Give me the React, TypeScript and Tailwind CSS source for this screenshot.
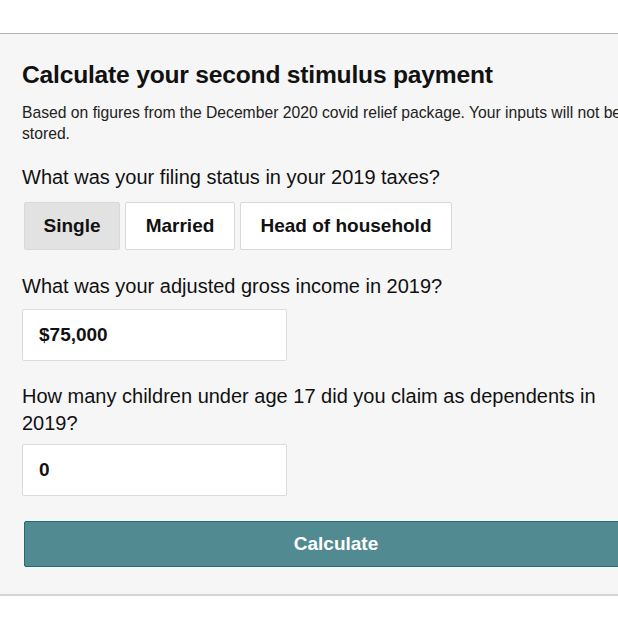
import { useState } from "react";

const statuses = [
    { label: "Single", w: "w-[96px]" },
    { label: "Married", w: "w-[110px]" },
    { label: "Head of household", w: "w-[212px]" },
];

export default function App() {
    const [status, setStatus] = useState("Single");

    return (
        <div className="w-[618px] h-[618px] overflow-hidden bg-white font-['Liberation_Sans',Arial,sans-serif] text-[#111]">
            <div className="h-[33px]" />
            <div className="w-[670px] border-t border-[#b3b3b3] border-b-2 border-b-[#d4d4d4] bg-[#f6f6f6] pl-[22px] pt-[27px] pb-[27px]">
                <div className="w-[626px]">
                    <h2 className="text-[24.6px] leading-[28px] font-bold tracking-[-0.2px]">Calculate your second stimulus payment</h2>
                    <p className="mt-[13px] text-[15.7px] leading-[21px] text-[#222]">
                        Based on figures from the December 2020 covid relief package. Your inputs will not be stored.
                    </p>

                    <p className="mt-[20px] text-[20px] leading-[27px]">What was your filing status in your 2019 taxes?</p>
                    <div className="mt-[11px] ml-[2px] flex gap-[5px]">
                        {statuses.map((s) => (
                            <button
                                key={s.label}
                                onClick={() => setStatus(s.label)}
                                className={
                                    s.w +
                                    " h-[48px] rounded-[2px] border border-[#d9d9d9] text-[19px] font-bold " +
                                    (status === s.label ? "bg-[#e2e2e2]" : "bg-white")
                                }
                            >
                                {s.label}
                            </button>
                        ))}
                    </div>

                    <p className="mt-[23px] text-[20px] leading-[27px]">What was your adjusted gross income in 2019?</p>
                    <input
                        defaultValue="$75,000"
                        className="mt-[9px] block w-[265px] h-[52px] px-[16px] bg-white border border-[#dcdcdc] rounded-[2px] text-[19px] font-bold outline-none"
                    />

                    <p className="mt-[22px] text-[20px] leading-[27px]">
                        How many children under age 17 did you claim as dependents in 2019?
                    </p>
                    <input
                        defaultValue="0"
                        className="mt-[7px] block w-[265px] h-[52px] px-[16px] bg-white border border-[#dcdcdc] rounded-[2px] text-[19px] font-bold outline-none"
                    />

                    <button className="mt-[25px] ml-[2px] block w-[624px] h-[46px] rounded-[2px] border border-[#1f6b76] bg-[#528a92] text-white text-[19px] font-bold">
                        Calculate
                    </button>
                </div>
            </div>
        </div>
    );
}
